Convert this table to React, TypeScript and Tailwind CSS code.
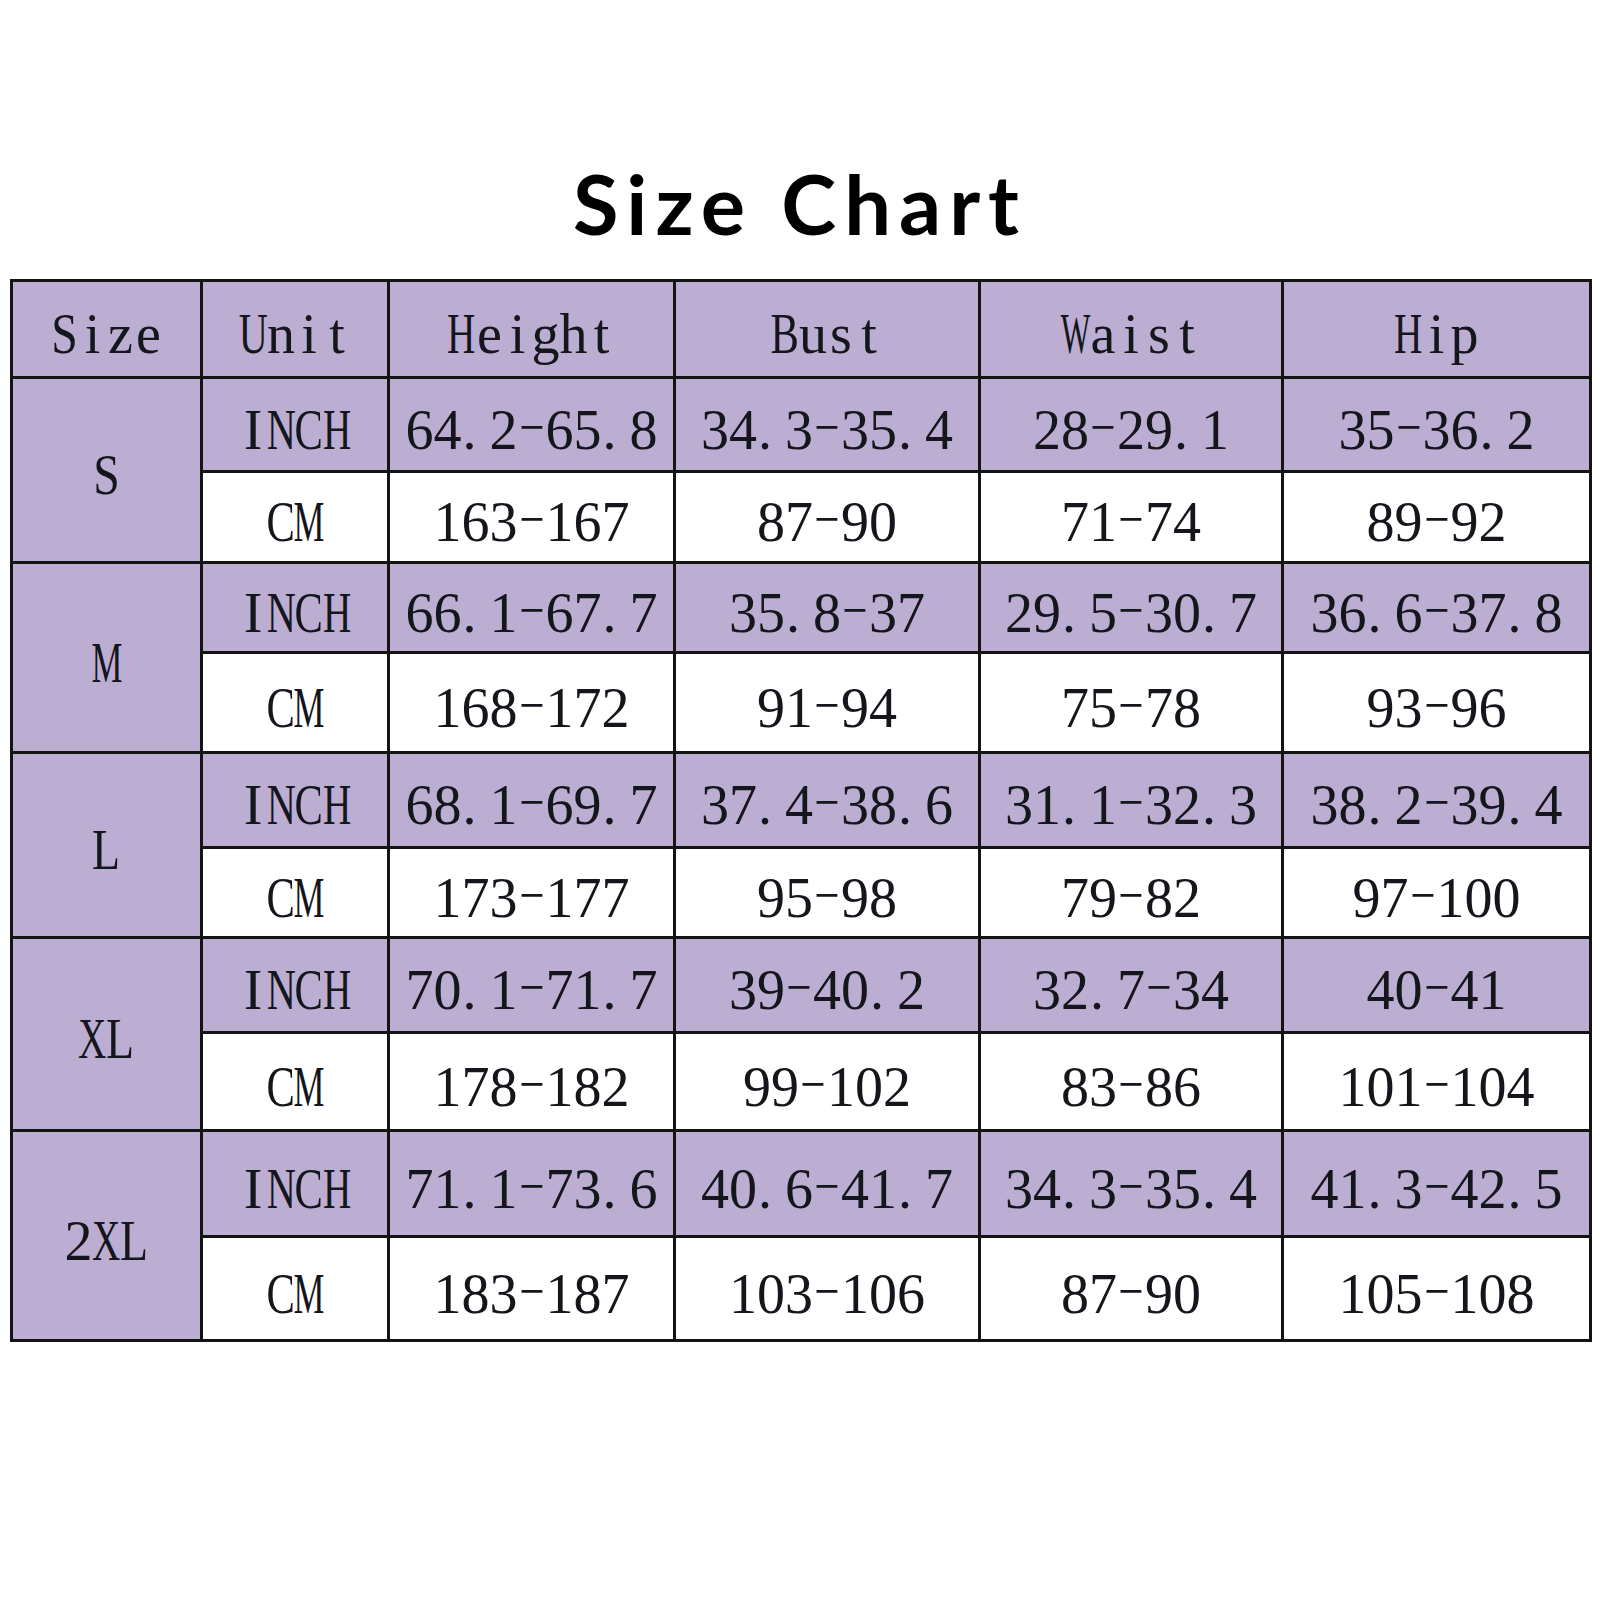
const PURPLE = 'bg-[#bcaed3]';

// width each capital is squeezed to, so letters sit in a 28px cell like the source font
const squeeze: Record<string, string> = {
  S: 'scale-x-[0.85]',
  U: 'scale-x-[0.72]',
  H: 'scale-x-[0.7]',
  B: 'scale-x-[0.76]',
  W: 'scale-x-[0.56]',
  N: 'scale-x-[0.72]',
  C: 'scale-x-[0.76]',
  M: 'scale-x-[0.62]',
  L: 'scale-x-[0.82]',
  X: 'scale-x-[0.7]',
};

type MonoProps = { text: string };

const Mono = ({ text }: MonoProps) => (
  <span className="flex font-['Liberation_Serif',serif] text-[56px] leading-none text-[#15151c]">
    {text.split('').map((ch, i) => {
      if (ch === '.') {
        return (
          <span key={i} className="flex w-[28px] justify-start pl-[1px]">
            .
          </span>
        );
      }
      if (ch === '-') {
        return (
          <span key={i} className="flex w-[28px] justify-center">
            <span className="-translate-y-[3px] scale-x-[0.8]">−</span>
          </span>
        );
      }
      return (
        <span key={i} className="flex w-[28px] justify-center">
          <span className={squeeze[ch] ?? ''}>{ch}</span>
        </span>
      );
    })}
  </span>
);

type SizeRow = {
  size: string;
  inch: string[];
  cm: string[];
};

const data: SizeRow[] = [
  {
    size: 'S',
    inch: ['64.2-65.8', '34.3-35.4', '28-29.1', '35-36.2'],
    cm: ['163-167', '87-90', '71-74', '89-92'],
  },
  {
    size: 'M',
    inch: ['66.1-67.7', '35.8-37', '29.5-30.7', '36.6-37.8'],
    cm: ['168-172', '91-94', '75-78', '93-96'],
  },
  {
    size: 'L',
    inch: ['68.1-69.7', '37.4-38.6', '31.1-32.3', '38.2-39.4'],
    cm: ['173-177', '95-98', '79-82', '97-100'],
  },
  {
    size: 'XL',
    inch: ['70.1-71.7', '39-40.2', '32.7-34', '40-41'],
    cm: ['178-182', '99-102', '83-86', '101-104'],
  },
  {
    size: '2XL',
    inch: ['71.1-73.6', '40.6-41.7', '34.3-35.4', '41.3-42.5'],
    cm: ['183-187', '103-106', '87-90', '105-108'],
  },
];

const headers = ['Size', 'Unit', 'Height', 'Bust', 'Waist', 'Hip'];

const cell = 'flex items-center justify-center pt-[10px]';

export default function App() {
  return (
    <div className="min-h-[1600px] w-[1600px] bg-white">
      <div className="h-[279px] pt-[162px] text-center">
        <h1 className="font-['Lato',sans-serif] text-[83px] font-bold leading-none tracking-[8px] text-black">
          Size Chart
        </h1>
      </div>

      <div className="ml-[10px] grid w-[1582px] grid-cols-[187px_184px_283px_302px_300px_305px] grid-rows-[94px_91px_88px_87px_97px_92px_87px_92px_95px_103px_101px] gap-[3px] border-[3px] border-[#141414] bg-[#141414]">
        {headers.map((h) => (
          <div key={h} className={`${cell} ${PURPLE}`}>
            <Mono text={h} />
          </div>
        ))}

        {data.map((row) => (
          <div key={row.size} className="contents">
            <div className={`${cell} ${PURPLE} row-span-2`}>
              <Mono text={row.size} />
            </div>
            <div className={`${cell} ${PURPLE}`}>
              <Mono text="INCH" />
            </div>
            {row.inch.map((v, i) => (
              <div key={`i${i}`} className={`${cell} ${PURPLE}`}>
                <Mono text={v} />
              </div>
            ))}
            <div className={`${cell} bg-white`}>
              <Mono text="CM" />
            </div>
            {row.cm.map((v, i) => (
              <div key={`c${i}`} className={`${cell} bg-white`}>
                <Mono text={v} />
              </div>
            ))}
          </div>
        ))}
      </div>
    </div>
  );
}
